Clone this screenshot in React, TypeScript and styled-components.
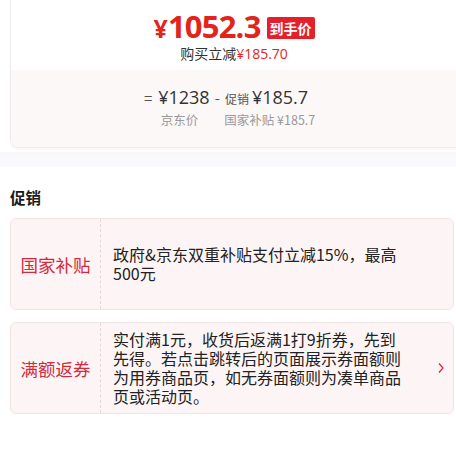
import React from "react";
import styled, { createGlobalStyle } from "styled-components";

const Global = createGlobalStyle`
  html, body { margin: 0; padding: 0; background: #fff; }
  body {
    font-family: "Noto Sans CJK SC", "Noto Sans", sans-serif;
    color: #1a1a1a;
    width: 456px;
    height: 455px;
    overflow: hidden;
  }
`;

const Page = styled.div`
  width: 456px;
  display: flex;
  flex-direction: column;
`;

const PriceCard = styled.div`
  margin: -8px -20px 0 10px;
  border: 1px solid #ececec;
  border-top: none;
  border-radius: 0 0 8px 8px;
  overflow: hidden;
  box-shadow: 0 1px 2px rgba(0, 0, 0, 0.04);
`;

const TopPart = styled.div`
  background: #fff;
  height: 78px;
  padding-top: 10px;
  box-sizing: border-box;
  display: flex;
  flex-direction: column;
  align-items: center;
`;

const BigRow = styled.div`
  display: flex;
  align-items: center;
  margin-left: -18px;
  height: 44px;
  margin-top: 2px;
`;

const BigPrice = styled.span`
  color: #e1251b;
  font-family: "Open Sans", "Noto Sans", sans-serif;
  font-weight: 700;
  font-size: 31px;
  letter-spacing: -0.8px;
  line-height: 1;
`;

const Yen = styled.span`
  font-size: 25px;
  margin-right: 1px;
`;

const Badge = styled.span`
  background: #e5202a;
  color: #fff;
  font-weight: 700;
  font-size: 14px;
  line-height: 22px;
  padding: 0 3px;
  border-radius: 2px;
  margin-left: 6px;
  margin-top: 4px;
`;

const SubLine = styled.div`
  font-size: 14px;
  color: #333;
  margin-left: -18px;
  margin-top: -3px;
  line-height: 17px;
`;

const Red = styled.span<{ $size?: number }>`
  color: #e1251b;
  font-family: "Open Sans", "Noto Sans", sans-serif;
  font-size: ${(p) => p.$size ?? 13}px;
`;

const BottomPart = styled.div`
  background: #fdf8f8;
  height: 77px;
  padding-top: 15px;
  box-sizing: border-box;
  display: flex;
  flex-direction: column;
  align-items: center;
`;

const FormulaRow = styled.div`
  display: flex;
  align-items: baseline;
  margin-left: -34px;
  color: #444;
  height: 24px;
`;

const Op = styled.span`
  font-size: 15px;
  margin: 0 6px 0 0;
  color: #555;
`;

const Minus = styled.span`
  font-size: 15px;
  margin: 0 5px;
  color: #555;
`;

const Num = styled.span`
  font-family: "Open Sans", "Noto Sans", sans-serif;
  font-size: 18px;
  color: #333;
`;

const SmallLabel = styled.span`
  font-size: 12px;
  color: #555;
  margin-right: 3px;
`;

const CaptionRow = styled.div`
  display: flex;
  gap: 26px;
  margin-left: -10px;
  margin-top: 2px;
  font-size: 12.5px;
  color: #999;
  line-height: 18px;
`;

const Band = styled.div`
  height: 15px;
  margin-top: 4px;
  background: linear-gradient(#f8f8fb, #fafafc);
`;

const Section = styled.div`
  padding: 0 0 0 10px;
`;

const Title = styled.div`
  font-size: 15.5px;
  font-weight: 700;
  color: #1a1a1a;
  margin-top: 18px;
  height: 24px;
  line-height: 24px;
`;

const PromoList = styled.div`
  display: flex;
  flex-direction: column;
  gap: 12px;
  margin-top: 9px;
  margin-right: 2px;
`;

const PromoCard = styled.div<{ $h: number }>`
  display: flex;
  height: ${(p) => p.$h}px;
  background: #fdf5f5;
  border: 1px solid #f1e4e4;
  border-radius: 6px;
  box-sizing: border-box;
`;

const PromoLabel = styled.div`
  width: 89px;
  flex: none;
  border-right: 1px dashed #e8d6d6;
  display: flex;
  align-items: center;
  justify-content: center;
  color: #d4293c;
  font-size: 17.5px;
`;

const PromoText = styled.div`
  flex: 1;
  padding: 0 10px 0 12px;
  display: flex;
  align-items: center;
  font-size: 16px;
  line-height: 19px;
  color: #222;
`;

const TextInner = styled.div`
  width: 300px;
`;

const Chevron = styled.div`
  width: 36px;
  flex: none;
  display: flex;
  align-items: center;
  justify-content: center;
  color: #d8273a;
`;

export default function App() {
  return (
    <Page>
      <Global />
      <PriceCard>
        <TopPart>
          <BigRow>
            <BigPrice>
              <Yen>¥</Yen>1052.3
            </BigPrice>
            <Badge>到手价</Badge>
          </BigRow>
          <SubLine>
            购买立减<Red $size={14}>¥185.70</Red>
          </SubLine>
        </TopPart>
        <BottomPart>
          <FormulaRow>
            <Op>=</Op>
            <Num>¥1238</Num>
            <Minus>-</Minus>
            <SmallLabel>促销</SmallLabel>
            <Num>¥185.7</Num>
          </FormulaRow>
          <CaptionRow>
            <span>京东价</span>
            <span>国家补贴 ¥185.7</span>
          </CaptionRow>
        </BottomPart>
      </PriceCard>
      <Band />
      <Section>
        <Title>促销</Title>
        <PromoList>
          <PromoCard $h={92}>
            <PromoLabel>国家补贴</PromoLabel>
            <PromoText>
              <TextInner>
                政府&amp;京东双重补贴支付立减15%，最高
                <br />
                500元
              </TextInner>
            </PromoText>
          </PromoCard>
          <PromoCard $h={92}>
            <PromoLabel>满额返券</PromoLabel>
            <PromoText>
              <TextInner>
                实付满1元，收货后返满1打9折券，先到
                <br />
                先得。若点击跳转后的页面展示券面额则
                <br />
                为用券商品页，如无券面额则为凑单商品
                <br />
                页或活动页。
              </TextInner>
            </PromoText>
            <Chevron>
              <svg width="8" height="12" viewBox="0 0 8 12">
                <path d="M2 1.5 L6 6 L2 10.5" fill="none" stroke="#d8273a" strokeWidth="1.3" />
              </svg>
            </Chevron>
          </PromoCard>
        </PromoList>
      </Section>
    </Page>
  );
}
